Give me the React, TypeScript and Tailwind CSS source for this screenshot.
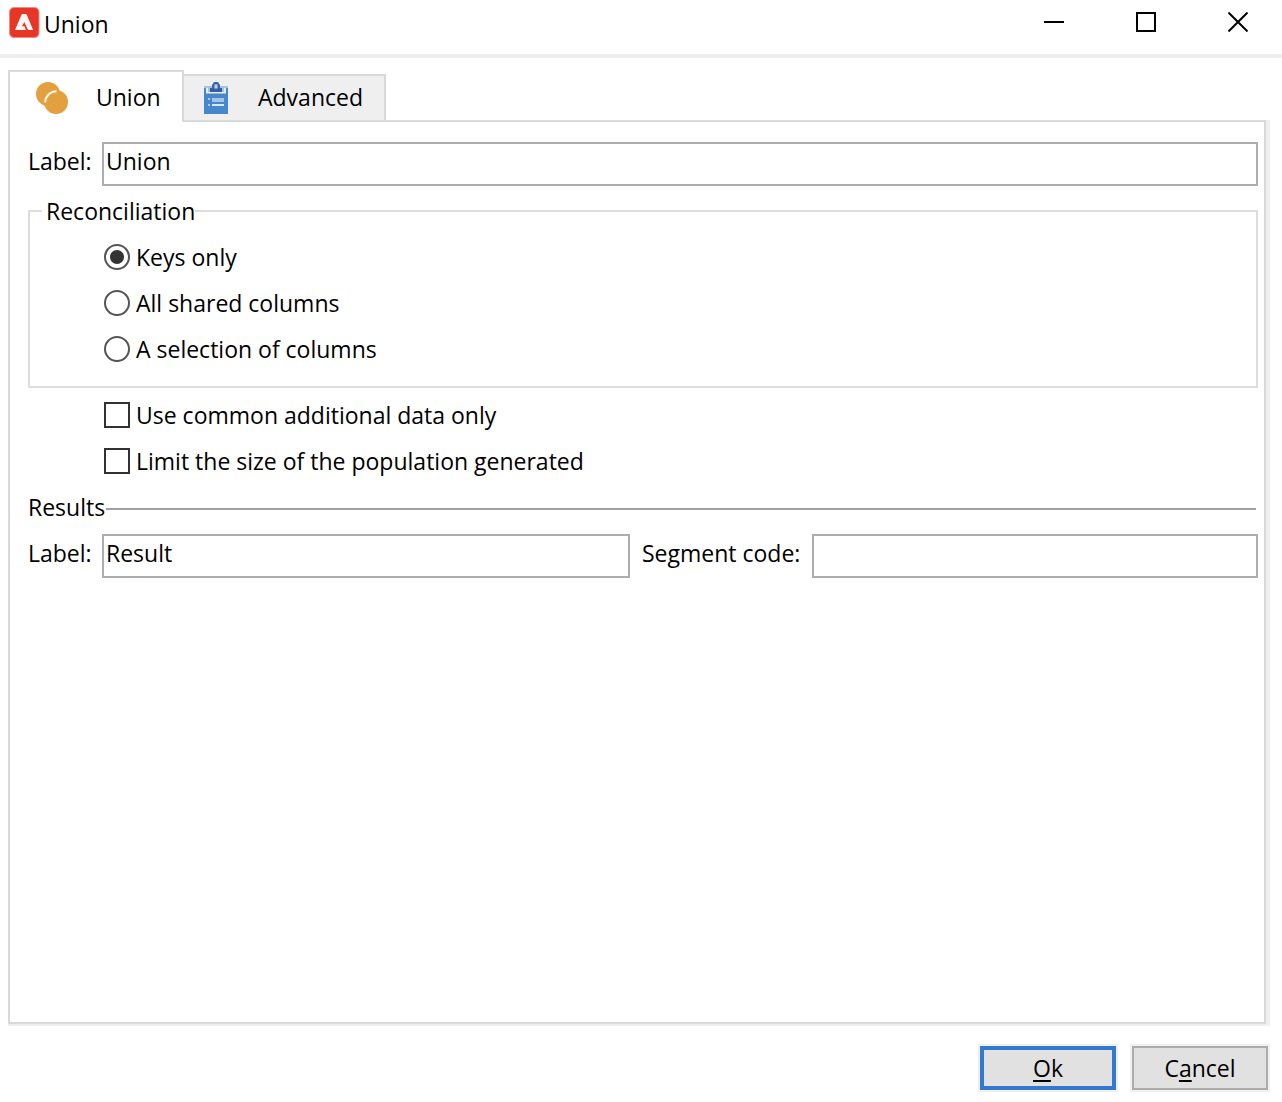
import { useState } from "react";
import type { ReactNode } from "react";

function AppLogo() {
  return (
    <svg className="size-8 shrink-0" viewBox="0 0 32 32" aria-hidden="true">
      <rect x="1.500" y="0.500" width="29.500" height="30" rx="4.500" fill="#e83525" stroke="#ef8d84" strokeWidth="1" />
      <path d="M14.500 7h3.200c.4 0 .7.200.9.600L25.200 23h-4.400c-.6 0-.9-.2-1.100-.7L16.300 15l-2.300 4.300h2.500l1.300 3.700H7l6.600-15.400c.2-.4.500-.6.900-.6z" fill="#fff5f3" />
    </svg>
  );
}

function UnionIcon() {
  return (
    <svg className="mt-0.5 size-8 shrink-0" viewBox="0 0 32 32" aria-hidden="true">
      <circle cx="12" cy="12" r="12" fill="#e3a03f" />
      <circle cx="20" cy="20" r="12" fill="#e3a03f" />
      <path d="M9.200 20.500A11.300 11.300 0 0 1 20.500 9.200" fill="none" stroke="#fdf6ea" strokeWidth="2" />
    </svg>
  );
}

function ClipboardIcon() {
  return (
    <svg className="h-8 w-6 shrink-0" viewBox="0 0 24 32" aria-hidden="true">
      <path d="M0 5h24v27H0z" fill="#4787cc" />
      <path d="M0 4h24v2H0z" fill="#a9c4e3" />
      <path d="M2 6h20v5.500H2z" fill="#e9eef4" />
      <path d="M4 5h16v5H4z" fill="#a9bfdb" />
      <path d="M6 6h12v4H6z" fill="#345f9f" />
      <path d="M8 7V3L10 0h4l2 3v4z" fill="#3a69aa" />
      <path d="M10.500 2.500h3v4h-3z" fill="#c4d3e6" />
      <path d="M4 16h2v2H4zM4 22h2v2H4z" fill="#a8c6e8" />
      <path d="M8 16h12v4H8z" fill="#a3c3e7" />
      <path d="M8 22h12v2H8z" fill="#dbe8f6" />
    </svg>
  );
}

function TextField({ id, value }: { id: string; value: string }) {
  return (
    <input
      id={id}
      type="text"
      defaultValue={value}
      className="h-11 w-full min-w-0 border-2 border-[#acacb3] bg-white px-0.5 pb-1.5 outline-none"
    />
  );
}

function RadioRow({ label, checked, onSelect }: { label: string; checked: boolean; onSelect: () => void }) {
  return (
    <label className="flex h-[46px] items-center gap-1.5">
      <input
        type="radio"
        name="reconciliation"
        checked={checked}
        onChange={onSelect}
        className="size-[26px] appearance-none rounded-full border-2 border-[#555] bg-white bg-clip-content p-1 checked:bg-[#333]"
      />
      {label}
    </label>
  );
}

function CheckRow({ label }: { label: string }) {
  return (
    <label className="flex h-[46px] items-center gap-1.5">
      <input
        type="checkbox"
        className="size-[26px] appearance-none border-2 border-[#333] bg-white bg-clip-content p-1 checked:bg-[#333]"
      />
      {label}
    </label>
  );
}

function WindowButton({ label, children }: { label: string; children: ReactNode }) {
  return (
    <button type="button" aria-label={label} className="flex h-11 w-[92px] items-center justify-center">
      <svg className="size-5" viewBox="0 0 20 20" fill="none" stroke="#000" strokeWidth="2" aria-hidden="true">
        {children}
      </svg>
    </button>
  );
}

const options = ["Keys only", "All shared columns", "A selection of columns"];

export default function App() {
  const [selected, setSelected] = useState(options[0]);

  return (
    <div className="flex min-h-screen flex-col bg-white font-['Open_Sans',sans-serif] text-[23px] leading-8 text-black">
      <header className="flex h-[58px] items-start justify-between border-b-4 border-[#f0f0f0] pl-2">
        <div className="flex items-start gap-1 pt-[7px]">
          <AppLogo />
          <h1 className="pt-px">Union</h1>
        </div>
        <div className="-mr-0.5 flex">
          <WindowButton label="Minimize"><path d="M0 10h20" /></WindowButton>
          <WindowButton label="Maximize"><path d="M1 1h18v18H1z" /></WindowButton>
          <WindowButton label="Close"><path d="M.5.5l19 19M19.500.5l-19 19" /></WindowButton>
        </div>
      </header>

      <main className="flex flex-1 flex-col pt-3 pr-3 pl-2">
        <div role="tablist" className="z-10 -mb-0.5 flex items-end">
          <button type="button" role="tab" aria-selected="true" className="flex h-[52px] w-44 items-center gap-7 border-2 border-b-0 border-[#d9d9d9] bg-white pl-[26px]">
            <UnionIcon />
            Union
          </button>
          <button type="button" role="tab" aria-selected="false" className="-ml-0.5 flex h-12 w-[204px] items-center gap-[30px] border-2 border-[#d9d9d9] bg-[#efefef] pl-5">
            <ClipboardIcon />
            <span className="pb-0.5">Advanced</span>
          </button>
        </div>

        <div role="tabpanel" className="flex flex-1 flex-col border-r-4 border-b-2 border-[#f0f0f0]">
          <div className="flex-1 border-2 border-[#d9d9d9] pt-5 pr-1.5 pl-[18px]">
            <div className="flex">
              <label htmlFor="label" className="w-[74px] shrink-0 pt-[3px]">Label:</label>
              <TextField id="label" value="Union" />
            </div>

            <fieldset className="mt-[9px] border-2 border-[#dcdcdc] pt-[7px] pb-3.5 pl-[74px]">
              <legend className="-ml-[62px] pl-1">Reconciliation</legend>
              {options.map((option) => (
                <RadioRow key={option} label={option} checked={selected === option} onSelect={() => setSelected(option)} />
              ))}
            </fieldset>

            <div className="mt-1 pl-[76px]">
              <CheckRow label="Use common additional data only" />
              <CheckRow label="Limit the size of the population generated" />
            </div>

            <div className="flex h-[50px] items-center gap-1 pr-0.5">
              <h2 className="w-[74px] pb-1">Results</h2>
              <hr className="flex-1 border-t-2 border-[#a0a0a0]" />
            </div>

            <div className="flex">
              <label htmlFor="result-label" className="w-[74px] shrink-0 pt-[3px]">Label:</label>
              <div className="min-w-0 flex-[528]">
                <TextField id="result-label" value="Result" />
              </div>
              <label htmlFor="segment-code" className="w-[182px] shrink-0 pt-[3px] pl-3">Segment code:</label>
              <div className="min-w-0 flex-[446]">
                <TextField id="segment-code" value="" />
              </div>
            </div>
          </div>
        </div>
      </main>

      <footer className="flex justify-end gap-4 pt-5 pr-3.5 pb-3">
        <button type="button" className="h-11 w-[136px] border-4 border-[#3279d3] bg-[#e1e1e1] outline-2 outline-[#f0f0f0]">
          <span className="underline decoration-2 underline-offset-3">O</span>k
        </button>
        <button type="button" className="h-11 w-[136px] border-2 border-[#adadad] bg-[#e1e1e1] outline-2 outline-[#f0f0f0]">
          C<span className="underline decoration-2 underline-offset-3">a</span>ncel
        </button>
      </footer>
    </div>
  );
}
